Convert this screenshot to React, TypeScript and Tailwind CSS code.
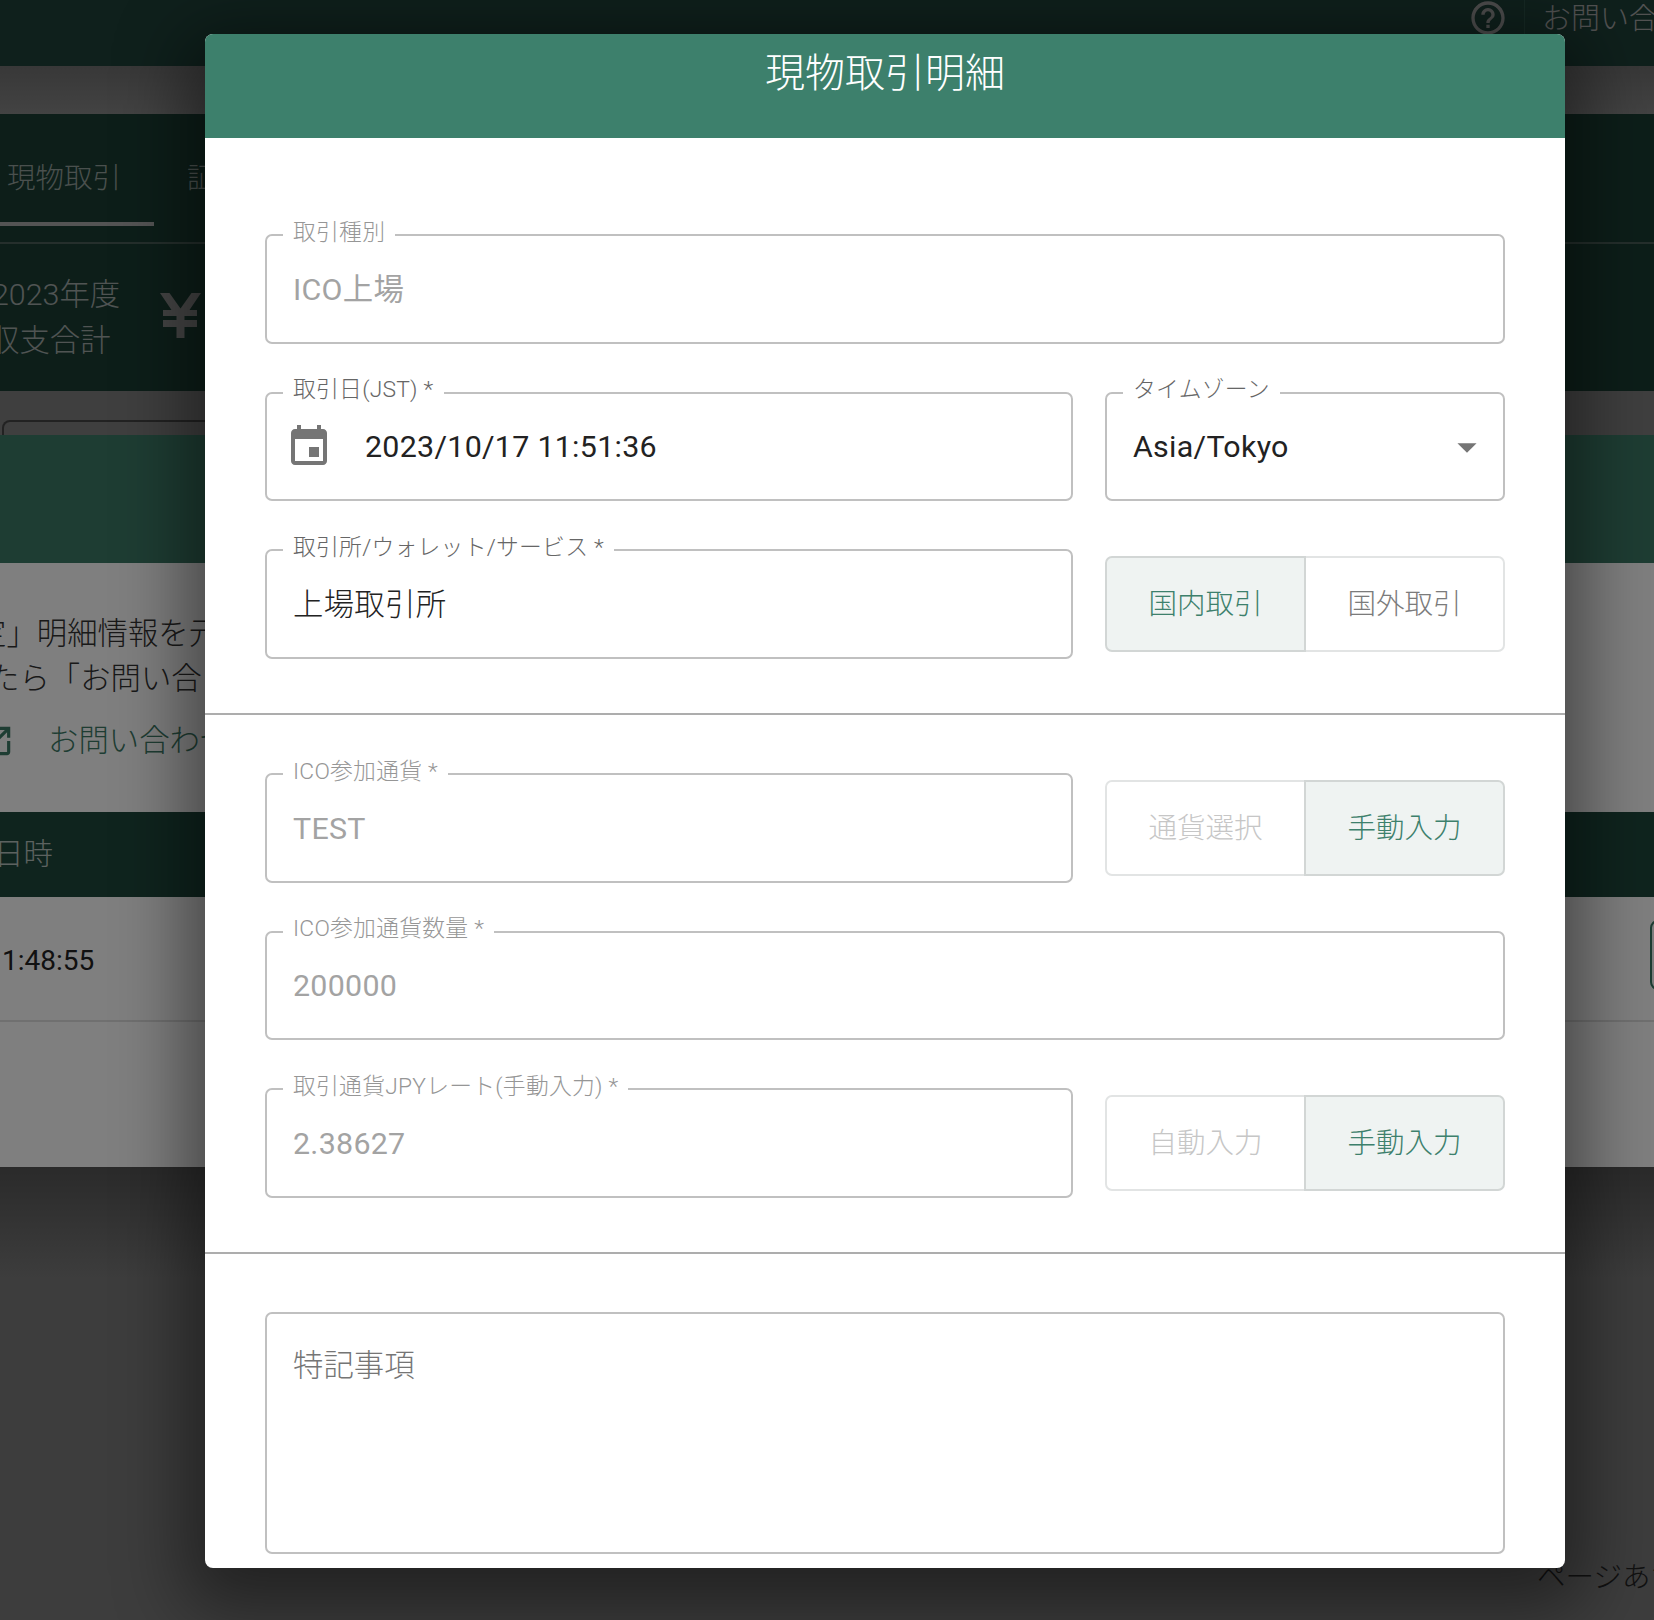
import React from "react";

const Field = ({
  label,
  tone = "normal",
  className = "",
  children,
}: {
  label?: string;
  tone?: "normal" | "disabled";
  className?: string;
  children: React.ReactNode;
}) => (
  <div className={`relative h-[109.5px] rounded-[7px] border-2 border-[#c0c0c0] flex items-center ${className}`}>
    {label && (
      <span
        className={`absolute left-[16px] top-[-17.5px] bg-white px-[10px] text-[22.8px] leading-[28px] tracking-[0.25px] whitespace-nowrap font-light ${
          tone === "disabled" ? "text-[#969696]" : "text-[#666666]"
        }`}
      >
        {label}
      </span>
    )}
    {children}
  </div>
);

const Value = ({ disabled, light, children }: { disabled?: boolean; light?: boolean; children: React.ReactNode }) => (
  <span
    className={`pl-[26px] pt-[2px] text-[30.4px] tracking-[0.285px] ${light ? "font-light" : ""} ${
      disabled ? "text-[#a3a3a3]" : "text-[#222222]"
    }`}
  >
    {children}
  </span>
);

const Toggle = ({ items, active, disabledOther }: { items: string[]; active: number; disabledOther?: boolean }) => (
  <div className="flex h-[96px] w-[400px] shrink-0">
    {items.map((t, i) => {
      const on = i === active;
      return (
        <div
          key={t}
          className={`flex-1 flex items-center justify-center pt-[3px] text-[28.5px] font-light border-2 ${
            i === 0 ? "rounded-l-[7px]" : "rounded-r-[7px] -ml-[2px]"
          } ${
            on
              ? "bg-[#eff3f2] border-[#d2d6d5] text-[#3d806c] z-10"
              : `border-[#e2e4e4] ${disabledOther ? "text-[#c6c6c6]" : "text-[#7b7b7b]"}`
          }`}
        >
          {t}
        </div>
      );
    })}
  </div>
);

const Row = ({ children }: { children: React.ReactNode }) => (
  <div className="flex items-center justify-between">{children}</div>
);

export default function App() {
  return (
    <div className="relative w-[1654px] h-[1620px] overflow-hidden font-[Roboto,'Noto_Sans_CJK_JP',sans-serif]">
      {/* Page behind the dialog */}
      <div className="flex flex-col h-full">
        <div className="h-[66px] bg-[#1e4038] flex items-start pl-[1468px] text-[29px] text-[#a4a4a4]">
          <svg viewBox="0 0 24 24" className="w-10 h-10 -mt-[2px] fill-[#999999] shrink-0">
            <path d="M11 18h2v-2h-2v2zm1-16C6.48 2 2 6.48 2 12s4.48 10 10 10 10-4.48 10-10S17.52 2 12 2zm0 18c-4.41 0-8-3.59-8-8s3.59-8 8-8 8 3.59 8 8-3.59 8-8 8zm0-14c-2.21 0-4 1.79-4 4h2c0-1.1.9-2 2-2s2 .9 2 2c0 2-3 1.75-3 5h2c0-2.25 3-2.5 3-5 0-2.21-1.79-4-4-4z" />
          </svg>
          <div className="ml-[16px] w-px h-[34px] bg-[#2c5348] shrink-0" />
          <span className="ml-[17px] pt-[2px] whitespace-nowrap leading-[34px] font-light">お問い合わせ</span>
        </div>
        <div className="h-[48px] bg-[linear-gradient(#707070,#868686)]" />
        <div className="h-[277px] bg-[#1a3d33] flex flex-col">
          <div className="h-[130px] border-b-2 border-[#4a5e58] flex items-start text-[28.5px] text-[#94a09c] font-light">
            <div className="w-[154px] h-[112px] border-b-4 border-[#a8a8a8] pl-[7px] pt-[46px] leading-[38px] shrink-0">現物取引</div>
            <div className="ml-[33px] pt-[46px] leading-[38px] whitespace-nowrap">証券取引</div>
          </div>
          <div className="flex items-center mt-[28px] text-[30.4px] text-[#a0a8a6]">
            <div className="w-[160px] leading-[46px] shrink-0 font-light">
              <div className="-ml-[8px] whitespace-nowrap">2023年度</div>
              <div className="-ml-[11px] whitespace-nowrap">収支合計</div>
            </div>
            <svg viewBox="0 0 41 45" className="w-[41px] h-[45px] mb-[6px] fill-[#8a8a8a] shrink-0">
              <path d="M0 0h9.5l11 15.5L31.5 0H41L29.5 17H37v6H24.5v4H37v7H24.5v11h-8V34H3v-7h13.5v-4H3v-6h8.5z" />
            </svg>
          </div>
        </div>
        <div className="h-[44px] bg-[#7e7e7e] pt-[29px] pl-[2px]">
          <div className="w-[400px] h-[15px] border-2 border-b-0 border-[#444444] rounded-t-[8px]" />
        </div>
        <div className="h-[128px] bg-[#3c7a66]" />
        <div className="h-[249px] bg-white text-[30.4px] leading-[45px] text-[#333333] pt-[48px] font-light">
          <div className="-ml-[24px] whitespace-nowrap">定」明細情報を元に</div>
          <div className="-ml-[11px] whitespace-nowrap">たら「お問い合</div>
          <div className="flex items-center mt-[17px] text-[#3c7a66] whitespace-nowrap">
            <svg viewBox="0 0 24 24" className="w-[38px] h-[38px] -ml-[23px] fill-[#3c7a66] shrink-0">
              <path d="M19 19H5V5h7V3H5c-1.11 0-2 .9-2 2v14c0 1.1.89 2 2 2h14c1.1 0 2-.9 2-2v-7h-2v7zM14 3v2h3.59l-9.83 9.83 1.41 1.41L19 6.41V10h2V3h-7z" />
            </svg>
            <span className="ml-[33px]">お問い合わせ</span>
          </div>
        </div>
        <div className="h-[85px] bg-[#1e483c] flex items-center text-[29.5px] text-[#b9c4c0] font-light">
          <span className="-ml-[6px]">日時</span>
        </div>
        <div className="h-[125px] bg-white border-b-2 border-[#e0e0e0] flex items-center justify-between text-[28px] text-[#222222]">
          <span className="ml-[2px] pt-[5px]">1:48:55</span>
          <div className="w-[20px] h-[70px] -mr-[16px] mb-[8px] border-2 border-[#3c7a66] rounded-[8px]" />
        </div>
        <div className="h-[145px] bg-white" />
        <div className="flex-1 bg-[linear-gradient(#555555,#7a7a7a_110px)] text-[28.5px] leading-[43px] text-[#222222] pt-[389px] pl-[1537px] whitespace-nowrap font-light">
          ページあたり
        </div>
      </div>

      {/* Scrim */}
      <div className="absolute inset-0 bg-black/50" />

      {/* Dialog */}
      <div className="absolute left-[205px] top-[34px] w-[1360px] h-[1534px] bg-white rounded-[8px] overflow-hidden shadow-[0_20px_70px_20px_rgba(0,0,0,0.45)]">
        <div className="h-[104px] bg-[#3d806c] text-center text-white text-[40px] leading-[80px] font-light">現物取引明細</div>

        <div className="px-[60px] pt-[96px] pb-[54.5px] flex flex-col gap-[48px]">
          <Field label="取引種別" tone="disabled">
            <Value disabled>ICO上場</Value>
          </Field>
          <Row>
            <Field label="取引日(JST) *" className="w-[808px]">
              <svg viewBox="0 0 24 24" className="w-[48px] h-[48px] ml-[18px] mt-[2px] fill-[#757575] shrink-0">
                <path d="M17 12h-5v5h5v-5zM16 1v2H8V1H6v2H5c-1.11 0-1.99.9-1.99 2L3 19c0 1.1.89 2 2 2h14c1.1 0 2-.9 2-2V5c0-1.1-.9-2-2-2h-1V1h-2zm3 18H5V8h14v11z" />
              </svg>
              <span className="ml-[32px] pt-[1px] text-[30.4px] tracking-[0.285px] text-[#222222]">2023/10/17 11:51:36</span>
            </Field>
            <Field label="タイムゾーン" className="w-[400px] justify-between">
              <Value>Asia/Tokyo</Value>
              <svg viewBox="0 0 24 24" className="w-[46px] h-[46px] mt-[1px] mr-[13px] fill-[#757575] shrink-0">
                <path d="M7 10l5 5 5-5z" />
              </svg>
            </Field>
          </Row>
          <Row>
            <Field label="取引所/ウォレット/サービス *" className="w-[808px]">
              <Value light>上場取引所</Value>
            </Field>
            <Toggle items={["国内取引", "国外取引"]} active={0} />
          </Row>
        </div>

        <div className="h-[2px] bg-[#adadad]" />

        <div className="px-[60px] pt-[58px] pb-[54.5px] flex flex-col gap-[48px]">
          <Row>
            <Field label="ICO参加通貨 *" tone="disabled" className="w-[808px]">
              <Value disabled>TEST</Value>
            </Field>
            <Toggle items={["通貨選択", "手動入力"]} active={1} disabledOther />
          </Row>
          <Field label="ICO参加通貨数量 *" tone="disabled">
            <Value disabled>200000</Value>
          </Field>
          <Row>
            <Field label="取引通貨JPYレート(手動入力) *" tone="disabled" className="w-[808px]">
              <Value disabled>2.38627</Value>
            </Field>
            <Toggle items={["自動入力", "手動入力"]} active={1} disabledOther />
          </Row>
        </div>

        <div className="h-[2px] bg-[#adadad]" />

        <div className="px-[60px] pt-[57.5px]">
          <div className="h-[242px] rounded-[7px] border-2 border-[#c0c0c0] px-[26px] pt-[31px] text-[30.4px] leading-[42px] text-[#757575] font-light">
            特記事項
          </div>
        </div>
      </div>
    </div>
  );
}
